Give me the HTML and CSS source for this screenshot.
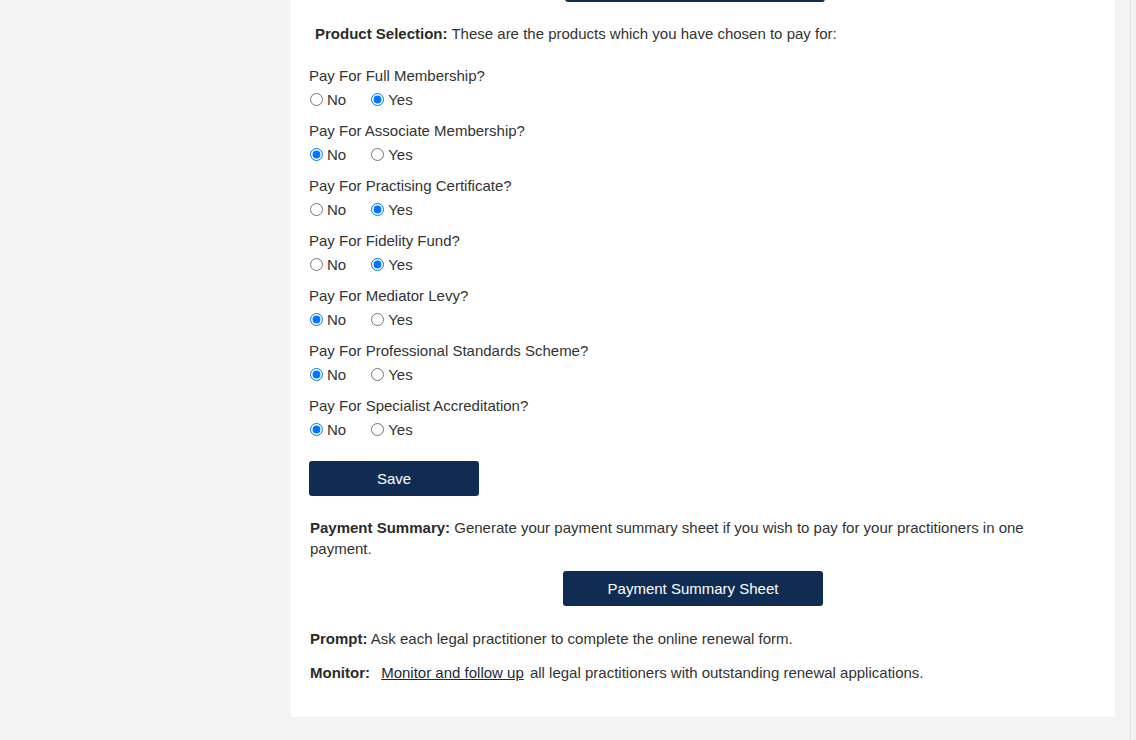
FILE: index.html
```html
<!DOCTYPE html>
<html lang="en">
<head>
  <meta charset="UTF-8" />
  <meta name="viewport" content="width=device-width, initial-scale=1.0"/>
  <title>Renewal Products</title>
  <link rel="stylesheet" href="styles.css">
</head>
<body>
  <div class="page">
    <div class="panel">
      <button class="btn btn-wide btn-top" type="button">Continue</button>

      <p class="intro"><strong>Product Selection:</strong> These are the products which you have chosen to pay for:</p>

      <form class="products">
        <div class="group">
          <div class="question">Pay For Full Membership?</div>
          <div class="options">
            <label class="option"><input type="radio" name="full"> No</label>
            <label class="option"><input type="radio" name="full" checked> Yes</label>
          </div>
        </div>
        <div class="group">
          <div class="question">Pay For Associate Membership?</div>
          <div class="options">
            <label class="option"><input type="radio" name="assoc" checked> No</label>
            <label class="option"><input type="radio" name="assoc"> Yes</label>
          </div>
        </div>
        <div class="group">
          <div class="question">Pay For Practising Certificate?</div>
          <div class="options">
            <label class="option"><input type="radio" name="cert"> No</label>
            <label class="option"><input type="radio" name="cert" checked> Yes</label>
          </div>
        </div>
        <div class="group">
          <div class="question">Pay For Fidelity Fund?</div>
          <div class="options">
            <label class="option"><input type="radio" name="fund"> No</label>
            <label class="option"><input type="radio" name="fund" checked> Yes</label>
          </div>
        </div>
        <div class="group">
          <div class="question">Pay For Mediator Levy?</div>
          <div class="options">
            <label class="option"><input type="radio" name="levy" checked> No</label>
            <label class="option"><input type="radio" name="levy"> Yes</label>
          </div>
        </div>
        <div class="group">
          <div class="question">Pay For Professional Standards Scheme?</div>
          <div class="options">
            <label class="option"><input type="radio" name="pss" checked> No</label>
            <label class="option"><input type="radio" name="pss"> Yes</label>
          </div>
        </div>
        <div class="group">
          <div class="question">Pay For Specialist Accreditation?</div>
          <div class="options">
            <label class="option"><input type="radio" name="spec" checked> No</label>
            <label class="option"><input type="radio" name="spec"> Yes</label>
          </div>
        </div>

        <button class="btn btn-save" type="button">Save</button>
      </form>

      <p class="summary"><strong>Payment Summary:</strong> Generate your payment summary sheet if you wish to pay for your practitioners in one payment.</p>
      <div class="center">
        <button class="btn btn-wide" type="button">Payment Summary Sheet</button>
      </div>

      <p class="prompt"><strong>Prompt:</strong> Ask each legal practitioner to complete the online renewal form.</p>
      <p class="monitor"><strong>Monitor:</strong> <a href="#">Monitor and follow up</a> all legal practitioners with outstanding renewal applications.</p>
    </div>
  </div>
</body>
</html>
```

FILE: styles.css
```css
* {
  box-sizing: border-box;
}
html, body {
  margin: 0;
  padding: 0;
  background: #f3f3f3;
}
body {
  font-family: 'Liberation Sans', Arial, sans-serif;
  font-size: 15px;
  line-height: 21px;
  color: #333;
}
.page {
  display: flow-root;
  width: 1131px;
  min-height: 100vh;
  border-right: 1px solid #e3e3e3;
}
.panel {
  width: 824px;
  margin: -33px 0 0 291px;
  padding: 0 38px 34px 18px;
  background: #fff;
}
p {
  margin: 0;
}
strong {
  color: #2b2b2b;
}
.btn {
  display: block;
  height: 35px;
  border: none;
  border-radius: 3px;
  background: #102c52;
  color: #fff;
  font-family: inherit;
  font-size: 15px;
  cursor: pointer;
}
.btn-wide {
  width: 260px;
}
.btn-top {
  margin-left: 256px;
}
.intro {
  margin-top: 21px;
  padding-left: 6px;
}
.products {
  margin-top: 21px;
}
.group {
  margin-bottom: 10px;
}
.options {
  display: flex;
  margin-top: 3px;
}
.option {
  display: flex;
  align-items: center;
  margin-right: 24px;
}
.option input {
  width: 13px;
  height: 13px;
  margin: 0 4px 0 1px;
}
.btn-save {
  width: 170px;
  margin-top: 21px;
}
.summary {
  margin-top: 21px;
  padding-left: 1px;
}
.center {
  display: flex;
  justify-content: center;
  margin-top: 12px;
}
.prompt {
  margin-top: 22px;
  padding-left: 1px;
}
.monitor {
  margin-top: 13px;
  padding-left: 1px;
}
.monitor a {
  color: #1d2b3c;
  margin: 0 2px 0 7px;
}
```
